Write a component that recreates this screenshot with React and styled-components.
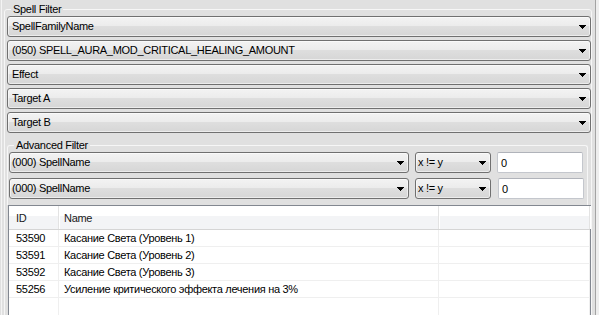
import React from "react";
import styled, { createGlobalStyle } from "styled-components";

const GlobalStyle = createGlobalStyle`
  html, body { margin: 0; padding: 0; background: #e0e0e0; }
  body { font-family: "Liberation Sans", Arial, sans-serif; }
`;

const Page = styled.div`
  width: 599px;
  height: 315px;
  overflow: hidden;
  display: flex;
  background: #e0e0e0;
  color: #000;
  font-family: "Liberation Sans", Arial, sans-serif;
  font-size: 11px;
  letter-spacing: -0.3px;
`;

const Gutter = styled.div`
  width: 1px;
  flex: none;
`;

const Frame = styled.div`
  width: 595px;
  flex: none;
  box-sizing: border-box;
  border-left: 1px solid #f4f4f4;
  border-right: 1px solid #a3a3a3;
  padding-left: 2px;
  display: flex;
  flex-direction: column;
`;

const RightStrip = styled.div`
  flex: 1;
  background: #eeeeee;
`;

const GroupBox = styled.fieldset`
  margin: 3px 0 0 0;
  padding: 0 0 0 2px;
  width: 588px;
  min-width: 0;
  box-sizing: border-box;
  border: 1px solid #f6f6f6;
  border-radius: 3px;
  height: 400px;
`;

const Legend = styled.legend`
  margin-left: ${(p) => p.$offset}px;
  padding: 0 2px;
  line-height: 13px;
  height: 13px;
  font-size: 11px;
`;

const ComboStack = styled.div`
  display: flex;
  flex-direction: column;
  gap: 3px;
`;

const Combo = styled.div`
  display: flex;
  align-items: center;
  height: 21px;
  box-sizing: border-box;
  width: ${(p) => (p.$width ? `${p.$width}px` : "auto")};
  flex: none;
  border: 1px solid #707070;
  border-radius: 3px;
  padding: 0 4px 0 ${(p) => p.$pad}px;
  background: linear-gradient(
    to bottom,
    #f3f3f3 0%,
    #ececec 45%,
    #dedede 50%,
    #d6d6d6 100%
  );
  box-shadow: inset 0 0 0 1px rgba(255, 255, 255, 0.55);
  white-space: nowrap;
`;

const ComboText = styled.span`
  flex: 1;
  overflow: hidden;
  line-height: 13px;
`;

const Arrow = styled.svg`
  width: 7px;
  height: 4px;
  flex: none;
  display: block;
`;

const AdvancedGroup = styled.fieldset`
  margin: 6px 3px 0 0;
  padding: 0 0 6px 1px;
  min-width: 0;
  box-sizing: border-box;
  border: 1px solid #f6f6f6;
  border-bottom: none;
  border-radius: 3px 3px 0 0;
`;

const FilterRows = styled.div`
  display: flex;
  flex-direction: column;
  gap: 5px;
`;

const FilterRow = styled.div`
  display: flex;
  gap: 6px;
`;

const TextBox = styled.div`
  width: 86px;
  height: 21px;
  box-sizing: border-box;
  margin-left: ${(p) => p.$shift || 0}px;
  border: 1px solid #c4c7cd;
  border-top-color: #b0b3ba;
  border-radius: 2px;
  background: #ffffff;
  padding-left: 3px;
  display: flex;
  align-items: center;
`;

const ListView = styled.div`
  margin-left: 1px;
  width: 583px;
  height: 140px;
  box-sizing: border-box;
  border: 1px solid #828790;
  background: #ffffff;
  display: flex;
  flex-direction: column;
`;

const Grid = styled.div`
  display: grid;
  grid-template-columns: 50px 380px 1fr;
`;

const Header = styled(Grid)`
  height: 24px;
  box-sizing: border-box;
  border-bottom: 1px solid #d5d5d5;
  background: linear-gradient(to bottom, #ffffff 0%, #ffffff 42%, #f3f4f6 42%, #f3f4f6 100%);
`;

const HeaderCell = styled.div`
  display: flex;
  align-items: center;
  padding-left: 5px;
  border-right: 1px solid #e3e3e3;
  box-shadow: 1px 0 0 #ffffff;
  &:first-child { padding-left: 7px; }
  color: #1a1a1a;
`;

const Row = styled(Grid)`
  height: 17px;
  box-sizing: border-box;
  border-bottom: 1px solid #efefef;
`;

const Cell = styled.div`
  display: flex;
  align-items: center;
  padding-left: 5px;
  border-right: 1px solid #efefef;
  white-space: nowrap;
  overflow: hidden;
  &:first-child { padding-left: 7px; }
`;

const Filler = styled(Grid)`
  flex: 1;
`;

const FillerCell = styled.div`
  border-right: 1px solid #efefef;
`;

const DropArrow = () => (
  <Arrow viewBox="0 0 7 4" shapeRendering="crispEdges">
    <polygon points="0,0 7,0 3.5,4" fill="#000" />
  </Arrow>
);

const ComboBox = ({ text, pad = 4, width }) => (
  <Combo $pad={pad} $width={width}>
    <ComboText>{text}</ComboText>
    <DropArrow />
  </Combo>
);

const topCombos = [
  "SpellFamilyName",
  "(050) SPELL_AURA_MOD_CRITICAL_HEALING_AMOUNT",
  "Effect",
  "Target A",
  "Target B",
];

const rows = [
  ["53590", "Касание Света (Уровень 1)"],
  ["53591", "Касание Света (Уровень 2)"],
  ["53592", "Касание Света (Уровень 3)"],
  ["55256", "Усиление критического эффекта лечения на 3%"],
];

export default function App() {
  return (
    <>
      <GlobalStyle />
      <Page>
        <Gutter />
        <Frame>
          <GroupBox>
            <Legend $offset={4}>Spell Filter</Legend>
            <ComboStack>
              {topCombos.map((t) => (
                <ComboBox key={t} text={t} pad={4} />
              ))}
            </ComboStack>
            <AdvancedGroup>
              <Legend $offset={5}>Advanced Filter</Legend>
              <FilterRows>
                {[0, 1].map((i) => (
                  <FilterRow key={i}>
                    <ComboBox text="(000) SpellName" pad={2} width={400} />
                    <ComboBox text="x != y" pad={2} width={76} />
                    <TextBox $shift={i}>0</TextBox>
                  </FilterRow>
                ))}
              </FilterRows>
            </AdvancedGroup>
            <ListView>
              <Header>
                <HeaderCell>ID</HeaderCell>
                <HeaderCell>Name</HeaderCell>
                <HeaderCell />
              </Header>
              {rows.map(([id, name]) => (
                <Row key={id}>
                  <Cell>{id}</Cell>
                  <Cell>{name}</Cell>
                  <Cell />
                </Row>
              ))}
              <Filler>
                <FillerCell />
                <FillerCell />
                <FillerCell />
              </Filler>
            </ListView>
          </GroupBox>
        </Frame>
        <RightStrip />
      </Page>
    </>
  );
}
